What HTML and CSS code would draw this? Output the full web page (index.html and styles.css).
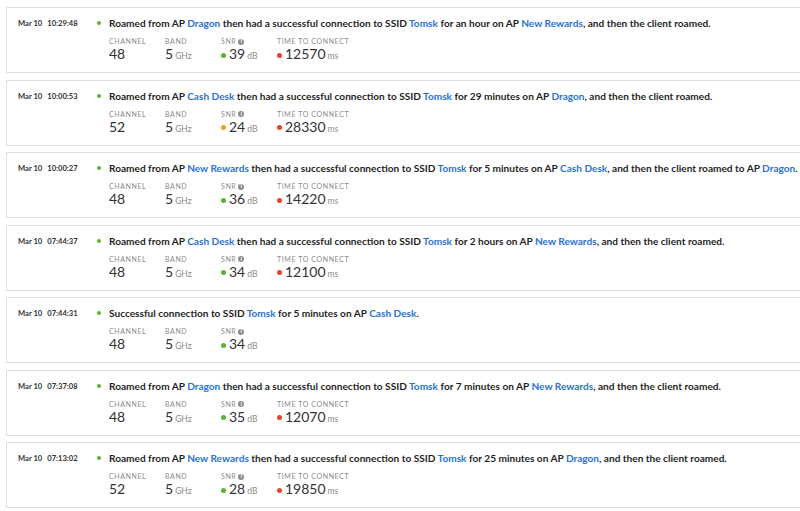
FILE: index.html
```html
<!DOCTYPE html>
<html>
<head>
<meta charset="utf-8">
<link rel="stylesheet" href="styles.css">
</head>
<body>
<div class="list">

  <div class="card">
    <div class="time"><span>Mar 10</span><span>10:29:48</span></div>
    <div class="dot green"></div>
    <div class="body">
      <div class="msg">Roamed from AP <a>Dragon</a> then had a successful connection to SSID <a>Tomsk</a> for an hour on AP <a>New Rewards</a>, and then the client roamed.</div>
      <div class="stats">
        <div class="stat"><div class="label">Channel</div><div class="val">48</div></div>
        <div class="stat"><div class="label">Band</div><div class="val">5<span class="unit">GHz</span></div></div>
        <div class="stat"><div class="label">SNR <span class="info">i</span></div><div class="val"><span class="sdot green"></span>39<span class="unit">dB</span></div></div>
        <div class="stat"><div class="label">Time to connect</div><div class="val"><span class="sdot red"></span>12570<span class="unit">ms</span></div></div>
      </div>
    </div>
  </div>

  <div class="card">
    <div class="time"><span>Mar 10</span><span>10:00:53</span></div>
    <div class="dot green"></div>
    <div class="body">
      <div class="msg">Roamed from AP <a>Cash Desk</a> then had a successful connection to SSID <a>Tomsk</a> for 29 minutes on AP <a>Dragon</a>, and then the client roamed.</div>
      <div class="stats">
        <div class="stat"><div class="label">Channel</div><div class="val">52</div></div>
        <div class="stat"><div class="label">Band</div><div class="val">5<span class="unit">GHz</span></div></div>
        <div class="stat"><div class="label">SNR <span class="info">i</span></div><div class="val"><span class="sdot orange"></span>24<span class="unit">dB</span></div></div>
        <div class="stat"><div class="label">Time to connect</div><div class="val"><span class="sdot red"></span>28330<span class="unit">ms</span></div></div>
      </div>
    </div>
  </div>

  <div class="card">
    <div class="time"><span>Mar 10</span><span>10:00:27</span></div>
    <div class="dot green"></div>
    <div class="body">
      <div class="msg">Roamed from AP <a>New Rewards</a> then had a successful connection to SSID <a>Tomsk</a> for 5 minutes on AP <a>Cash Desk</a>, and then the client roamed to AP <a>Dragon</a>.</div>
      <div class="stats">
        <div class="stat"><div class="label">Channel</div><div class="val">48</div></div>
        <div class="stat"><div class="label">Band</div><div class="val">5<span class="unit">GHz</span></div></div>
        <div class="stat"><div class="label">SNR <span class="info">i</span></div><div class="val"><span class="sdot green"></span>36<span class="unit">dB</span></div></div>
        <div class="stat"><div class="label">Time to connect</div><div class="val"><span class="sdot red"></span>14220<span class="unit">ms</span></div></div>
      </div>
    </div>
  </div>

  <div class="card">
    <div class="time"><span>Mar 10</span><span>07:44:37</span></div>
    <div class="dot green"></div>
    <div class="body">
      <div class="msg">Roamed from AP <a>Cash Desk</a> then had a successful connection to SSID <a>Tomsk</a> for 2 hours on AP <a>New Rewards</a>, and then the client roamed.</div>
      <div class="stats">
        <div class="stat"><div class="label">Channel</div><div class="val">48</div></div>
        <div class="stat"><div class="label">Band</div><div class="val">5<span class="unit">GHz</span></div></div>
        <div class="stat"><div class="label">SNR <span class="info">i</span></div><div class="val"><span class="sdot green"></span>34<span class="unit">dB</span></div></div>
        <div class="stat"><div class="label">Time to connect</div><div class="val"><span class="sdot red"></span>12100<span class="unit">ms</span></div></div>
      </div>
    </div>
  </div>

  <div class="card">
    <div class="time"><span>Mar 10</span><span>07:44:31</span></div>
    <div class="dot green"></div>
    <div class="body">
      <div class="msg">Successful connection to SSID <a>Tomsk</a> for 5 minutes on AP <a>Cash Desk</a>.</div>
      <div class="stats">
        <div class="stat"><div class="label">Channel</div><div class="val">48</div></div>
        <div class="stat"><div class="label">Band</div><div class="val">5<span class="unit">GHz</span></div></div>
        <div class="stat"><div class="label">SNR <span class="info">i</span></div><div class="val"><span class="sdot green"></span>34<span class="unit">dB</span></div></div>
      </div>
    </div>
  </div>

  <div class="card">
    <div class="time"><span>Mar 10</span><span>07:37:08</span></div>
    <div class="dot green"></div>
    <div class="body">
      <div class="msg">Roamed from AP <a>Dragon</a> then had a successful connection to SSID <a>Tomsk</a> for 7 minutes on AP <a>New Rewards</a>, and then the client roamed.</div>
      <div class="stats">
        <div class="stat"><div class="label">Channel</div><div class="val">48</div></div>
        <div class="stat"><div class="label">Band</div><div class="val">5<span class="unit">GHz</span></div></div>
        <div class="stat"><div class="label">SNR <span class="info">i</span></div><div class="val"><span class="sdot green"></span>35<span class="unit">dB</span></div></div>
        <div class="stat"><div class="label">Time to connect</div><div class="val"><span class="sdot red"></span>12070<span class="unit">ms</span></div></div>
      </div>
    </div>
  </div>

  <div class="card">
    <div class="time"><span>Mar 10</span><span>07:13:02</span></div>
    <div class="dot green"></div>
    <div class="body">
      <div class="msg">Roamed from AP <a>New Rewards</a> then had a successful connection to SSID <a>Tomsk</a> for 25 minutes on AP <a>Dragon</a>, and then the client roamed.</div>
      <div class="stats">
        <div class="stat"><div class="label">Channel</div><div class="val">52</div></div>
        <div class="stat"><div class="label">Band</div><div class="val">5<span class="unit">GHz</span></div></div>
        <div class="stat"><div class="label">SNR <span class="info">i</span></div><div class="val"><span class="sdot green"></span>28<span class="unit">dB</span></div></div>
        <div class="stat"><div class="label">Time to connect</div><div class="val"><span class="sdot red"></span>19850<span class="unit">ms</span></div></div>
      </div>
    </div>
  </div>

</div>
</body>
</html>
```

FILE: styles.css
```css
html, body {
  margin: 0;
  padding: 0;
  background: #fff;
  overflow: hidden;
}
body {
  font-family: "Lato", "Noto Sans", sans-serif;
  color: #222;
}
.list {
  padding: 7px 0 0 6px;
  overflow: hidden;
}
.card {
  box-sizing: border-box;
  width: 820px;
  height: 66px;
  margin-bottom: 6.5px;
  border: 1px solid #e0e0e0;
  display: flex;
  align-items: flex-start;
  padding: 9px 0 0 11px;
}
.time {
  width: 79px;
  flex: none;
  font-size: 7.6px;
  font-weight: 700;
  color: #333;
  display: flex;
  gap: 5px;
  line-height: 12px;
}
.dot {
  width: 4px;
  height: 4px;
  border-radius: 50%;
  margin: 4px 8px 0 0;
  flex: none;
}
.green { background: #5ab138; }
.orange { background: #f2a01b; }
.red { background: #e8422c; }
.body {
  display: flex;
  flex-direction: column;
}
.msg {
  font-size: 10.1px;
  font-weight: 700;
  line-height: 12px;
  white-space: nowrap;
  color: #1f1f1f;
}
.msg a {
  color: #2a72d4;
}
.stats {
  display: flex;
  margin-top: 8px;
}
.stat {
  width: 56px;
  flex: none;
}
.stat:last-child {
  width: auto;
}
.label {
  font-size: 7px;
  letter-spacing: 0.6px;
  text-transform: uppercase;
  color: #8a8a8a;
  line-height: 9px;
  display: flex;
  align-items: center;
  gap: 2px;
  white-space: nowrap;
}
.info {
  display: inline-flex;
  width: 6px;
  height: 6px;
  border-radius: 50%;
  background: #8a8a8a;
  color: #fff;
  font-size: 5px;
  font-weight: 700;
  align-items: center;
  justify-content: center;
  letter-spacing: 0;
}
.val {
  font-size: 14px;
  color: #333;
  line-height: 16px;
  display: flex;
  align-items: baseline;
  white-space: nowrap;
}
.unit {
  font-size: 8.5px;
  color: #8a8a8a;
  margin-left: 2px;
}
.sdot {
  display: inline-block;
  width: 5px;
  height: 5px;
  border-radius: 50%;
  margin-right: 3px;
  align-self: center;
}
```
